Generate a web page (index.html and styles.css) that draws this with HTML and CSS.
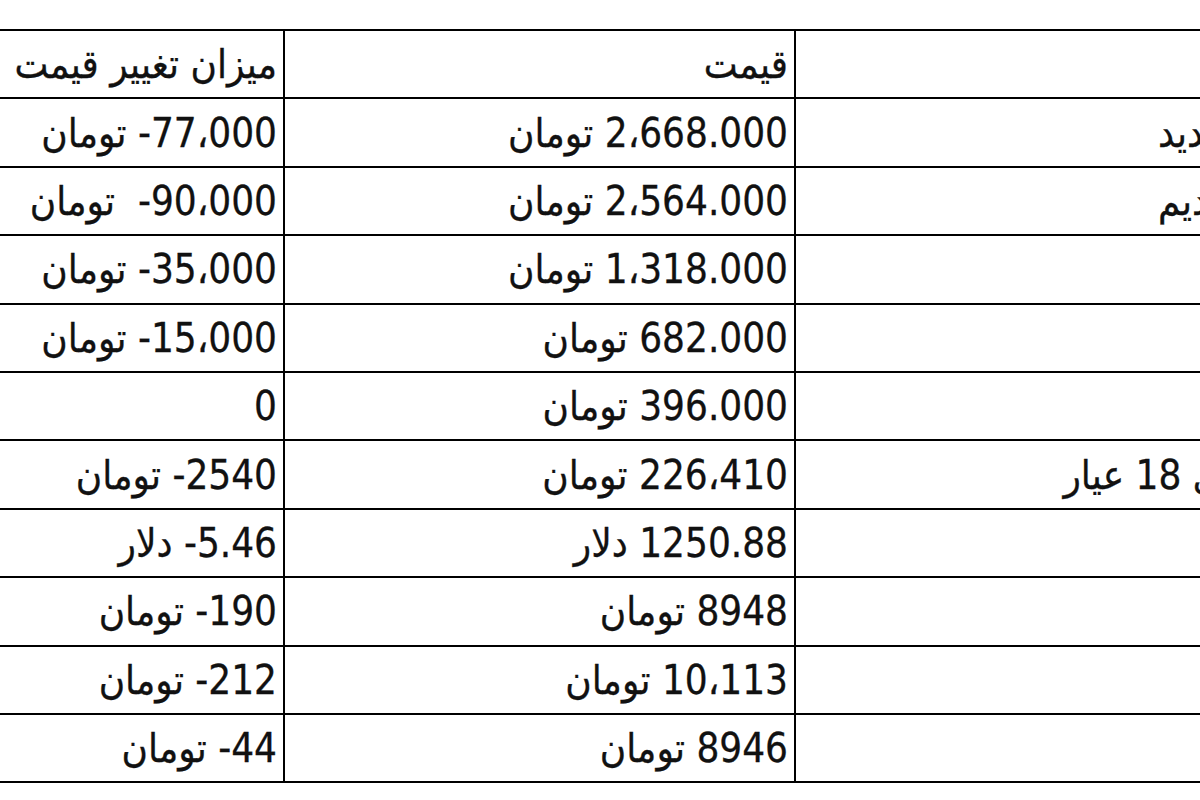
FILE: index.html
```html
<!DOCTYPE html>
<html lang="fa">
<head>
<meta charset="utf-8">
<title>قیمت طلا و سکه</title>
<link rel="stylesheet" href="styles.css">
</head>
<body>
<div class="page">
  <div class="wrap" dir="rtl">
    <table class="prices">
      <tr>
        <td class="c-name">نوع</td>
        <td class="c-price">قیمت</td>
        <td class="c-change">میزان تغییر قیمت</td>
      </tr>
      <tr>
        <td class="c-name">سکه طرح جدید</td>
        <td class="c-price">2،668.000 تومان</td>
        <td class="c-change">77،000- تومان</td>
      </tr>
      <tr>
        <td class="c-name">سکه طرح قدیم</td>
        <td class="c-price">2،564.000 تومان</td>
        <td class="c-change">90،000-&nbsp; تومان</td>
      </tr>
      <tr>
        <td class="c-name">نیم سکه</td>
        <td class="c-price">1،318.000 تومان</td>
        <td class="c-change">35،000- تومان</td>
      </tr>
      <tr>
        <td class="c-name">ربع سکه</td>
        <td class="c-price">682.000 تومان</td>
        <td class="c-change">15،000- تومان</td>
      </tr>
      <tr>
        <td class="c-name">سکه گرمی</td>
        <td class="c-price">396.000 تومان</td>
        <td class="c-change">0</td>
      </tr>
      <tr>
        <td class="c-name">هر گرم طلای 18 عیار</td>
        <td class="c-price">226،410 تومان</td>
        <td class="c-change">2540- تومان</td>
      </tr>
      <tr>
        <td class="c-name">انس طلا</td>
        <td class="c-price">1250.88 دلار</td>
        <td class="c-change">5.46- دلار</td>
      </tr>
      <tr>
        <td class="c-name">دلار</td>
        <td class="c-price">8948 تومان</td>
        <td class="c-change">190- تومان</td>
      </tr>
      <tr>
        <td class="c-name">یورو</td>
        <td class="c-price">10،113 تومان</td>
        <td class="c-change">212- تومان</td>
      </tr>
      <tr>
        <td class="c-name">درهم</td>
        <td class="c-price">8946 تومان</td>
        <td class="c-change">44- تومان</td>
      </tr>
    </table>
  </div>
</div>
</body>
</html>
```
FILE: styles.css
```css
html, body {
  margin: 0;
  padding: 0;
  background: #ffffff;
  overflow: hidden;
  width: 1200px;
  height: 800px;
}

.page {
  padding-top: 29px;
  width: 1200px;
  overflow: hidden;
}

.wrap {
  display: flex;
  justify-content: flex-start;
  margin-right: -200px;
}

.prices {
  border-collapse: collapse;
  flex: none;
  font-family: "DejaVu Sans Condensed", "DejaVu Sans", sans-serif;
  font-size: 40px;
  color: #111111;
  -webkit-text-stroke: 0.3px #111111;
}

.prices td {
  border: 2px solid #000000;
  height: 66.4px;
  padding: 0 6px 0 6px;
  text-align: right;
  vertical-align: middle;
  white-space: nowrap;
  line-height: 1;
}

.c-name {
  width: 590px;
}

.c-price {
  width: 497px;
}

.c-change {
  width: 500px;
}
```
